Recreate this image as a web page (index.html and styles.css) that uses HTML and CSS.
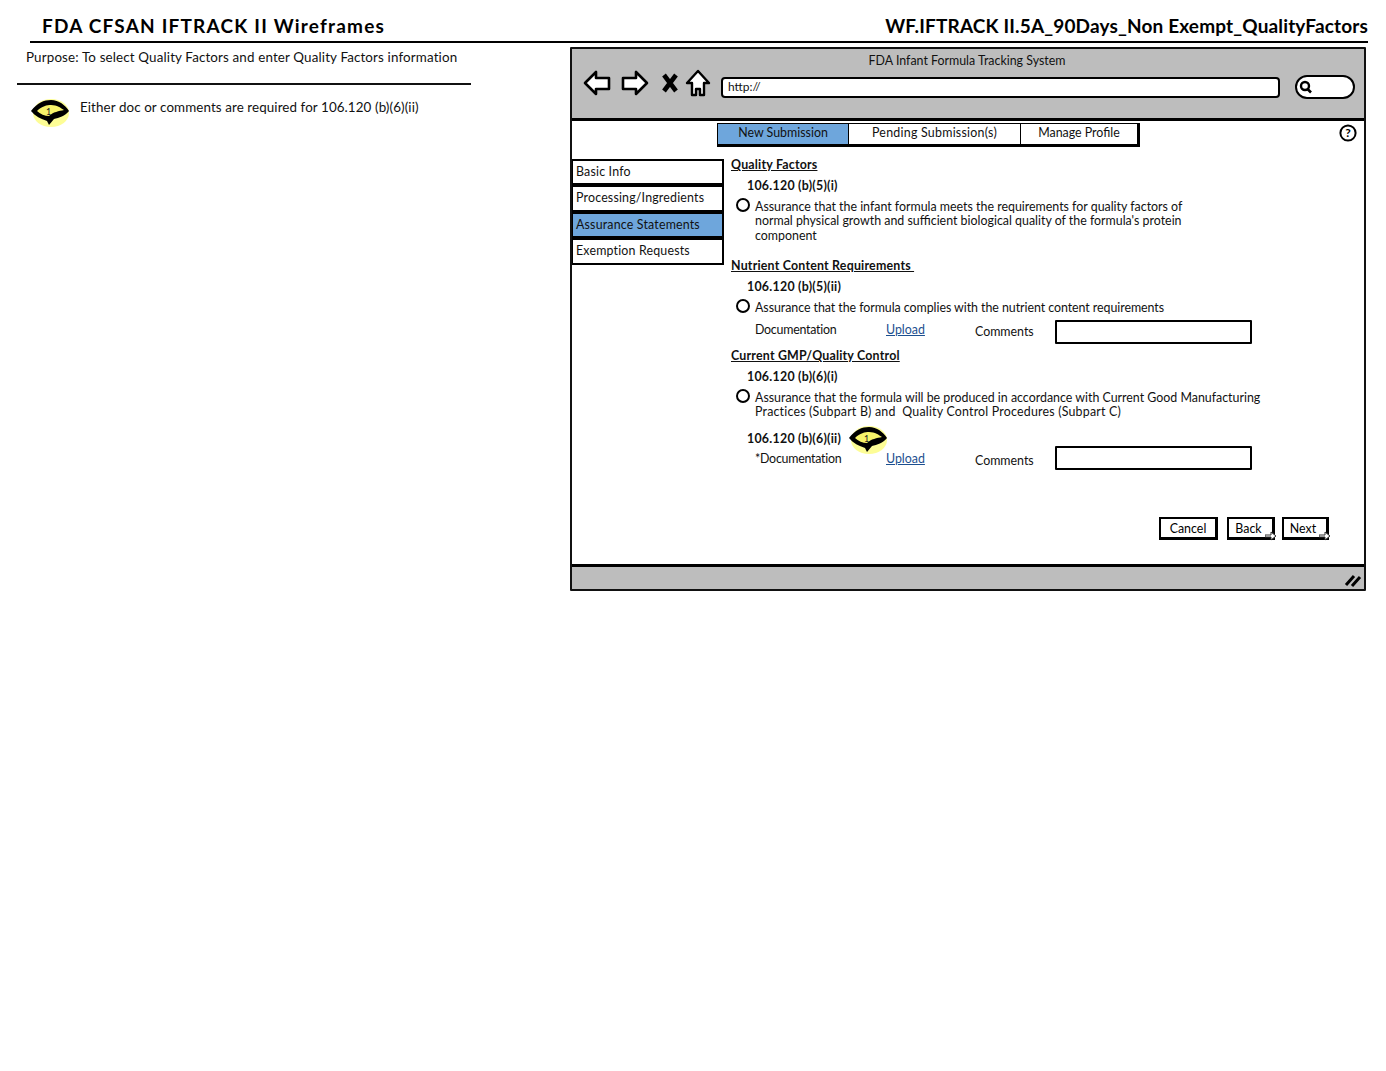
FILE: index.html
```html
<!DOCTYPE html>
<html lang="en">
<head>
<meta charset="utf-8">
<title>FDA CFSAN IFTRACK II Wireframes</title>
<link rel="stylesheet" href="styles.css">
</head>
<body>
<header class="page-head">
  <h1 class="title title-left">FDA CFSAN IFTRACK II Wireframes</h1>
  <h1 class="title title-right">WF.IFTRACK II.5A_90Days_Non Exempt_QualityFactors</h1>
</header>

<div class="canvas">
  <aside class="notes">
    <p class="purpose">Purpose: To select Quality Factors and enter Quality Factors information</p>
    <div class="note">
      <svg class="callout" viewBox="0 0 40 30">
        <ellipse cx="21" cy="16" rx="18" ry="14" fill="#fdfd96"/>
        <path d="M1 14 C7 6 14 3 21 3 C29 3 35 8 39 14 C35 19 29 21 24 22 L19 28 L17 24 C11 22 5 19 1 14 Z" fill="#000"/>
        <path d="M7 14 C12 9 17 8 21 8 C27 8 31 11 34 13 C29 14 23 15 19 19 C15 19 10 17 7 14 Z" fill="#f7f36a"/>
        <text x="16" y="18" class="callout-num">1</text>
      </svg>
      <p class="note-text">Either doc or comments are required for 106.120 (b)(6)(ii)</p>
    </div>
  </aside>

  <section class="browser">
    <div class="chrome">
      <div class="chrome-title">FDA Infant Formula Tracking System</div>
      <div class="toolbar">
        <svg class="nav nav-arrow" viewBox="0 0 28 26"><path d="M2 13 L13 2 V8 H26 V19 H13 V24 Z" fill="#fff" stroke="#000" stroke-width="2.6" stroke-linejoin="round"/></svg>
        <svg class="nav nav-arrow nav-next" viewBox="0 0 28 26"><path d="M26 13 L15 2 V8 H2 V19 H15 V24 Z" fill="#fff" stroke="#000" stroke-width="2.6" stroke-linejoin="round"/></svg>
        <svg class="nav nav-stop" viewBox="0 0 18 20"><path d="M3 2 L15 18 M15 2 L3 18" stroke="#000" stroke-width="4.6" fill="none"/></svg>
        <svg class="nav nav-home" viewBox="0 0 26 28"><path d="M13 2 L24 14 H19 V26 H15 V20 H11 V26 H7 V14 H2 Z" fill="#fff" stroke="#000" stroke-width="2.4" stroke-linejoin="round"/></svg>
        <div class="url">http://</div>
        <div class="search">
          <svg class="search-icon" viewBox="0 0 14 14"><circle cx="6" cy="6" r="4" fill="#fff" stroke="#000" stroke-width="2.4"/><path d="M8.5 9 L12 12.5" stroke="#000" stroke-width="2.6"/></svg>
        </div>
      </div>
    </div>

    <div class="content">
      <svg class="help" viewBox="0 0 18 18"><circle cx="9" cy="9" r="7.6" fill="#fff" stroke="#000" stroke-width="2"/><text x="9" y="13" class="help-mark">?</text></svg>
      <nav class="tabs">
        <a class="tab tab-active tab-1">New Submission</a>
        <a class="tab tab-2">Pending Submission(s)</a>
        <a class="tab tab-3">Manage Profile</a>
      </nav>

      <div class="work">
        <ul class="side">
          <li class="side-item">Basic Info</li>
          <li class="side-item">Processing/Ingredients</li>
          <li class="side-item side-active">Assurance Statements</li>
          <li class="side-item">Exemption Requests</li>
        </ul>

        <div class="form">
          <h2 class="heading">Quality Factors</h2>
          <h3 class="code">106.120 (b)(5)(i)</h3>
          <div class="check check-3">
            <span class="radio"></span>
            <p class="check-text">Assurance that the infant formula meets the requirements for quality factors of<br>normal physical growth and sufficient biological quality of the formula's protein<br>component</p>
          </div>

          <h2 class="heading heading-2">Nutrient Content Requirements&nbsp;</h2>
          <h3 class="code">106.120 (b)(5)(ii)</h3>
          <div class="check check-1">
            <span class="radio"></span>
            <p class="check-text check-text-tight">Assurance that the formula complies with the nutrient content requirements</p>
          </div>
          <div class="doc-row doc-row-1">
            <span class="doc-label">Documentation</span>
            <a class="upload">Upload</a>
            <span class="comments">Comments</span>
            <span class="comment-box"></span>
          </div>

          <h2 class="heading heading-3">Current GMP/Quality Control</h2>
          <h3 class="code">106.120 (b)(6)(i)</h3>
          <div class="check check-2">
            <span class="radio"></span>
            <p class="check-text">Assurance that the formula will be produced in accordance with Current Good Manufacturing<br><span class="line-wide">Practices (Subpart B) and&nbsp; Quality Control Procedures (Subpart C)</span></p>
          </div>
          <div class="code-row">
            <h3 class="code code-inline">106.120 (b)(6)(ii)</h3>
            <svg class="callout callout-inline" viewBox="0 0 40 30">
              <ellipse cx="21" cy="16" rx="18" ry="14" fill="#fdfd96"/>
              <path d="M1 14 C7 6 14 3 21 3 C29 3 35 8 39 14 C35 19 29 21 24 22 L19 28 L17 24 C11 22 5 19 1 14 Z" fill="#000"/>
              <path d="M7 14 C12 9 17 8 21 8 C27 8 31 11 34 13 C29 14 23 15 19 19 C15 19 10 17 7 14 Z" fill="#f7f36a"/>
              <text x="16" y="18" class="callout-num">1</text>
            </svg>
          </div>
          <div class="doc-row doc-row-2">
            <span class="doc-label">*Documentation</span>
            <a class="upload">Upload</a>
            <span class="comments">Comments</span>
            <span class="comment-box"></span>
          </div>

          <div class="actions">
            <button class="btn btn-cancel">Cancel</button>
            <button class="btn btn-back">Back<svg class="btn-cursor" viewBox="0 0 12 10"><path d="M0 4 H6 V1 L11 5 L6 9 V6 H0 Z" fill="#fff" stroke="#333" stroke-width="1"/></svg></button>
            <button class="btn btn-next">Next<svg class="btn-cursor" viewBox="0 0 12 10"><path d="M0 4 H6 V1 L11 5 L6 9 V6 H0 Z" fill="#fff" stroke="#333" stroke-width="1"/></svg></button>
          </div>
        </div>
      </div>
    </div>

    <div class="status">
      <svg class="grip" viewBox="0 0 18 14"><path d="M2 12 L10 3 M8 13 L16 4" stroke="#000" stroke-width="3" fill="none"/></svg>
    </div>
  </section>
</div>
</body>
</html>
```

FILE: styles.css
```css
* { box-sizing: border-box; }
html, body { margin: 0; padding: 0; background: #fff; }
body {
  width: 1386px;
  height: 1071px;
  overflow: hidden;
  font-family: Lato, "Open Sans", sans-serif;
  font-size: 13px;
  color: #111;
}
p, h1, h2, h3, ul { margin: 0; padding: 0; }

.page-head {
  display: flex;
  justify-content: space-between;
  align-items: center;
  height: 43px;
  margin: 0 18px 0 30px;
  padding: 15px 0 4px 12px;
  border-bottom: 2px solid #000;
}
.title {
  font-size: 19px;
  line-height: 24px;
  font-weight: 700;
  color: #000;
}
.title-left { letter-spacing: 1.2px; }
.title-right { letter-spacing: .15px; }

.canvas {
  display: grid;
  grid-template-columns: 454px 796px;
  column-gap: 99px;
  padding: 4px 0 0 17px;
}

.notes { padding-top: 1px; }
.purpose {
  height: 37px;
  padding: 1px 0 0 9px;
  line-height: 16px;
  font-size: 13.4px;
  letter-spacing: .14px;
  border-bottom: 2px solid #111;
}
.note {
  display: flex;
  align-items: flex-start;
  padding: 12px 0 0 13px;
}
.note-text {
  margin-left: 10px;
  font-size: 13.4px;
  letter-spacing: .09px;
  line-height: 20px;
}
.callout { display: block; flex: none; width: 40px; height: 30px; overflow: visible; }
.callout-num { font-family: Lato, sans-serif; font-size: 9px; fill: #222; }

.browser {
  display: flex;
  flex-direction: column;
  height: 544px;
  border: 2.5px solid #111;
  border-radius: 1px;
}
.chrome {
  height: 72px;
  padding-top: 3px;
  background: #bdbdbd;
  border-bottom: 3px solid #000;
}
.chrome-title {
  height: 18px;
  padding-right: 2px;
  line-height: 18px;
  text-align: center;
  font-size: 12.4px;
}
.toolbar {
  display: flex;
  align-items: center;
  height: 31px;
  padding: 0 10px 0 11px;
}
.nav { display: block; flex: none; margin-bottom: 6px; }
.nav-arrow { width: 28px; height: 26px; }
.nav-next { margin-left: 10px; }
.nav-stop { width: 18px; height: 20px; margin-left: 12px; }
.nav-home { width: 26px; height: 28px; margin-left: 6px; }
.url {
  flex: none;
  width: 559px;
  height: 21px;
  margin: 4px 0 0 10px;
  padding-left: 5px;
  line-height: 16px;
  font-size: 12px;
  background: #fff;
  border: 2.5px solid #000;
  border-radius: 4px;
}
.search {
  flex: none;
  display: flex;
  align-items: center;
  width: 60px;
  height: 24px;
  margin: 2px 0 0 15px;
  padding-left: 2px;
  background: #fff;
  border: 2.5px solid #000;
  border-radius: 12px;
}
.search-icon { display: block; width: 14px; height: 14px; }

.content { position: relative; flex: 1; background: #fff; }
.help { position: absolute; top: 3px; right: 7px; width: 18px; height: 18px; }
.help-mark { font-family: Lato, sans-serif; font-size: 12px; font-weight: 700; text-anchor: middle; }

.tabs {
  display: flex;
  height: 24px;
  margin: 2px 0 0 145px;
  width: 423px;
  border-bottom: 3px solid #000;
  border-right: 3px solid #000;
}
.tab {
  display: block;
  height: 21px;
  line-height: 17px;
  text-align: center;
  font-size: 12.4px;
  border-top: 1px solid #000;
  border-right: 1.5px solid #000;
}
.tab-1 { width: 132px; }
.tab-2 { width: 172px; letter-spacing: .25px; }
.tab-3 { width: 116px; border-right: 0; }
.tab-active { background: #6ea6dc; border-left: 1.5px solid #000; }

.work { display: flex; align-items: flex-start; }
.side {
  flex: none;
  list-style: none;
  width: 159px;
  padding: 12px 7px 0 0;
}
.side-item {
  height: 26.4px;
  padding-left: 3px;
  line-height: 21px;
  font-size: 12.4px;
  letter-spacing: .18px;
  border: 2px solid #000;
  border-left-width: 1px;
  border-bottom-width: 2.5px;
  background: #fff;
}
.side-active { background: #6ea6dc; }

.form { flex: 1; padding-top: 8px; min-width: 0; }
.heading {
  height: 20px;
  line-height: 20px;
  font-size: 12.4px;
  font-weight: 700;
  letter-spacing: .2px;
  text-decoration: underline;
}
.heading-2 { margin-top: 1px; }
.heading-3 { margin-top: 2px; }
.code {
  height: 20px;
  margin: 1px 0 0 16px;
  line-height: 20px;
  font-size: 12.4px;
  font-weight: 700;
  letter-spacing: .25px;
}
.check {
  display: flex;
  align-items: flex-start;
  margin: 4px 0 0 5px;
}
.check-3 { height: 55px; }
.check-1 { height: 19px; }
.check-2 { height: 38px; }
.radio {
  flex: none;
  width: 14px;
  height: 14px;
  margin-top: -2px;
  border: 2px solid #000;
  border-radius: 50%;
  background: #fff;
}
.check-text {
  margin-left: 5px;
  line-height: 14.4px;
  font-size: 12.4px;
  white-space: nowrap;
}
.check-text-tight { letter-spacing: -.05px; }
.line-wide { letter-spacing: .2px; }
.doc-row {
  display: flex;
  align-items: center;
  height: 24px;
  padding-left: 24px;
  font-size: 12.4px;
}
.doc-row-2 { margin-top: -3px; }
.doc-label { width: 131px; margin-top: -5px; letter-spacing: -.25px; }
.upload {
  width: 89px;
  margin-top: -5px;
  color: #1c4f8f;
  text-decoration: underline;
}
.comments { width: 80px; margin-top: -1px; }
.doc-row-2 .doc-label, .doc-row-2 .upload { margin-top: 0; }
.doc-row-2 .comments { margin-top: 4px; }
.comment-box {
  display: block;
  width: 197px;
  height: 24px;
  border: 2px solid #000;
  border-radius: 1px;
  background: #fff;
}
.code-row {
  display: flex;
  align-items: center;
  height: 20px;
}
.code-inline { margin-top: 0; }
.callout-inline { margin-left: 7px; }

.actions {
  position: relative;
  display: flex;
  height: 24px;
  margin: 47px 0 0 428px;
}
.btn {
  position: relative;
  display: block;
  height: 23px;
  padding: 0;
  font: inherit;
  font-size: 12.4px;
  color: #000;
  background: #fff;
  border: 2px solid #000;
  border-right-width: 3.5px;
  border-bottom-width: 3.5px;
}
.btn-cancel { width: 59px; }
.btn-back { width: 48px; margin-left: 9px; padding-right: 4px; }
.btn-next { width: 47px; margin-left: 7px; padding-right: 4px; }
.btn-cursor { position: absolute; right: -5px; bottom: -4px; width: 12px; height: 10px; }

.status {
  position: relative;
  height: 25px;
  background: #bdbdbd;
  border-top: 3px solid #000;
}
.grip { position: absolute; right: 2px; bottom: 2px; width: 18px; height: 14px; }
```
